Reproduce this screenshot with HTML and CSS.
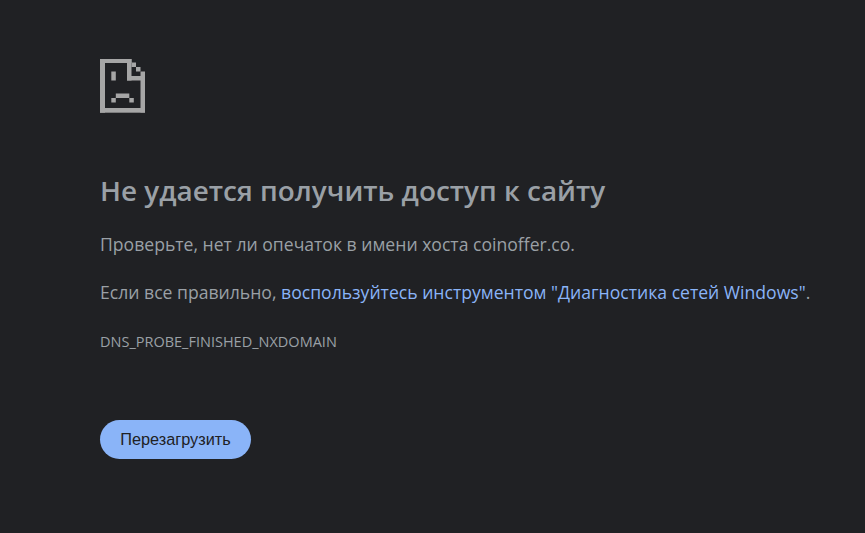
FILE: index.html
```html
<!DOCTYPE html>
<html lang="ru">
<head>
  <meta charset="UTF-8">
  <title>coinoffer.co</title>
  <link rel="stylesheet" href="styles.css">
</head>
<body>
  <div class="container">
    <svg class="icon" width="45" height="55" viewBox="0 0 45 55">
      <g fill="#a6a6a6">
        <!-- page outline -->
        <rect x="0" y="1" width="31.5" height="4"/>
        <rect x="0" y="1" width="5" height="53.7"/>
        <rect x="0" y="50" width="45" height="4.7"/>
        <rect x="40.5" y="13.5" width="4.5" height="41"/>
        <!-- folded corner -->
        <rect x="27" y="1" width="4.5" height="21.5"/>
        <rect x="27" y="18" width="18" height="4.5"/>
        <rect x="31.5" y="4.5" width="4.5" height="4.5"/>
        <rect x="36" y="9" width="4.5" height="4.5"/>
        <!-- eye and mouth -->
        <rect x="11.3" y="13.5" width="4.5" height="9"/>
        <rect x="15.8" y="35.5" width="13.5" height="4.5"/>
        <rect x="11.3" y="40" width="4.5" height="4.5"/>
        <rect x="29.3" y="40" width="4.5" height="4.5"/>
      </g>
    </svg>
    <h1>Не удается получить доступ к сайту</h1>
    <p class="hint">Проверьте, нет ли опечаток в имени хоста coinoffer.co.</p>
    <p class="hint">Если все правильно, <a href="#">воспользуйтесь инструментом "Диагностика сетей Windows"</a>.</p>
    <div class="code">DNS_PROBE_FINISHED_NXDOMAIN</div>
    <button class="reload">Перезагрузить</button>
  </div>
</body>
</html>
```

FILE: styles.css
```css
html, body {
  margin: 0;
  height: 100%;
}

body {
  background-color: #202124;
  color: #9aa0a6;
  font-family: "Open Sans", "Noto Sans", sans-serif;
}

.container {
  padding: 58px 0 0 100px;
  display: flex;
  flex-direction: column;
  align-items: flex-start;
}

.icon {
  display: block;
}

h1 {
  margin: 57px 0 0;
  font-size: 27.9px;
  line-height: 40px;
  font-weight: 600;
  color: #9aa0a6;
}

.hint {
  margin: 21px 0 0;
  font-size: 17.6px;
  line-height: 27px;
}

.hint + .hint {
  margin-top: 21px;
}

a {
  color: #8ab4f8;
  text-decoration: none;
}

.code {
  margin-top: 26px;
  font-size: 14.5px;
  line-height: 20px;
}

.reload {
  margin-top: 68px;
  width: 151px;
  height: 39px;
  border: 0;
  border-radius: 20px;
  background-color: #8ab4f8;
  color: #202124;
  font-family: "Liberation Sans", Arial, sans-serif;
  font-size: 16.3px;
  padding: 0;
}
```
